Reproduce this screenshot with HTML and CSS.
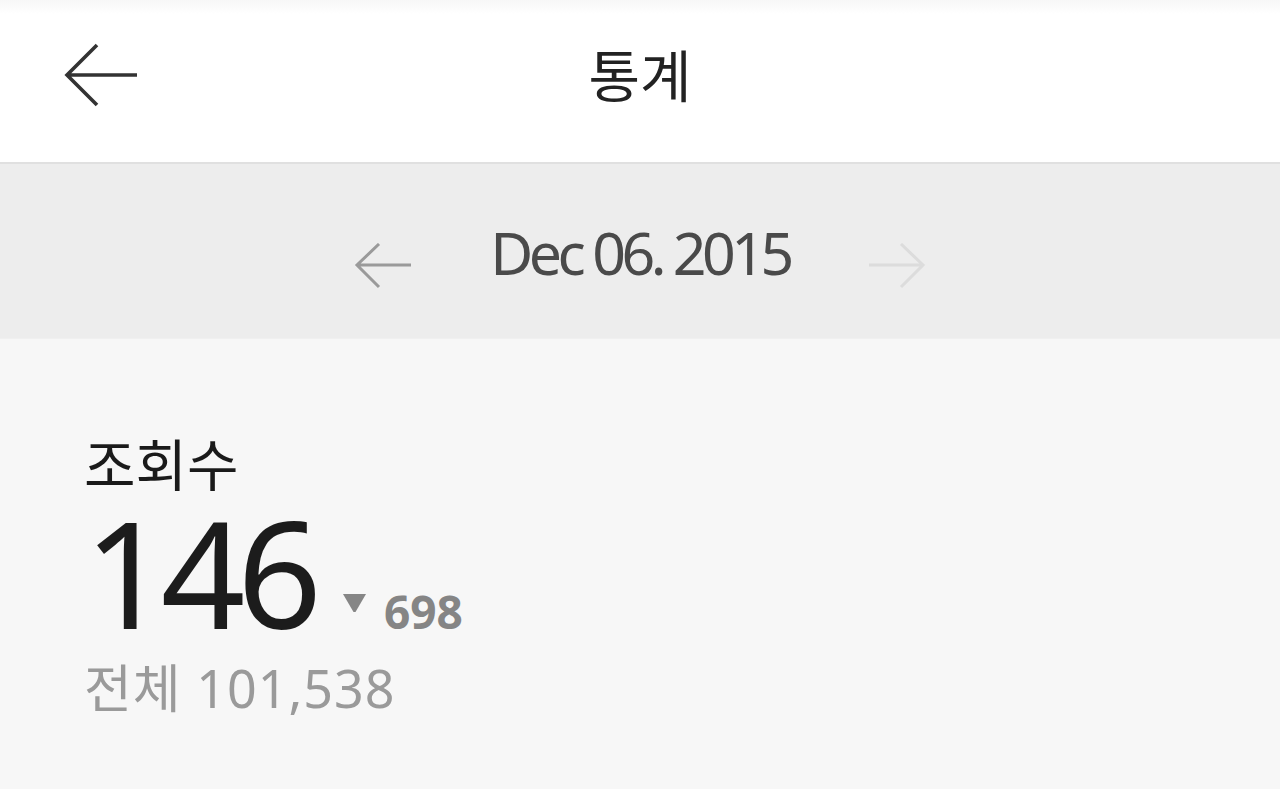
FILE: index.html
```html
<!DOCTYPE html>
<html lang="ko">
<head>
  <meta charset="UTF-8">
  <meta name="viewport" content="width=device-width, initial-scale=1.0">
  <link rel="stylesheet" href="styles.css">
  <title>통계</title>
</head>
<body>
  <header class="topbar">
    <button class="back-btn" type="button" aria-label="뒤로">
      <svg width="76" height="66" viewBox="0 0 76 66">
        <path d="M74 32 H4 M34 2 L4 32 L34 62" fill="none" stroke="#333" stroke-width="3.6"/>
      </svg>
    </button>
    <h1 class="title">통계</h1>
  </header>

  <nav class="datebar">
    <button class="nav-arrow prev" type="button" aria-label="이전">
      <svg width="58" height="46" viewBox="0 0 58 46">
        <path d="M57 22 H3 M25 1 L3 22 L25 44" fill="none" stroke="#9a9a9a" stroke-width="3"/>
      </svg>
    </button>
    <span class="date">Dec 06. 2015</span>
    <button class="nav-arrow next" type="button" aria-label="다음">
      <svg width="58" height="46" viewBox="0 0 58 46">
        <path d="M1 22 H55 M33 1 L55 22 L33 44" fill="none" stroke="#dcdcdc" stroke-width="3"/>
      </svg>
    </button>
  </nav>

  <main class="stats">
    <div class="stat-label">조회수</div>
    <div class="stat-row">
      <span class="stat-value">146</span>
      <svg class="tri" width="25" height="20" viewBox="0 0 25 20">
        <path d="M1 1 H24 L13.5 19 H11.5 Z" fill="#868686"/>
      </svg>
      <span class="stat-diff">698</span>
    </div>
    <div class="stat-total">전체 101,538</div>
  </main>
</body>
</html>
```
FILE: styles.css
```css
body {
  margin: 0;
  font-family: "Noto Sans", "Noto Sans CJK KR", sans-serif;
  background-color: #f7f7f7;
  height: 789px;
  overflow: hidden;
}
button {
  background: none;
  border: none;
  padding: 0;
  cursor: pointer;
}
.topbar {
  height: 162px;
  background: linear-gradient(#f7f7f7, #ffffff 14px);
  border-bottom: 2px solid #e0e0e0;
  display: flex;
  align-items: center;
  justify-content: center;
  position: relative;
}
.back-btn {
  position: absolute;
  left: 63px;
  top: 43px;
  display: flex;
}
.title {
  margin: -16px 0 0;
  font-family: "Noto Sans CJK KR", sans-serif;
  font-weight: 400;
  font-size: 56px;
  line-height: 1;
  color: #222;
}
.datebar {
  height: 174px;
  background-color: #ededed;
  border-bottom: 1px solid #f0f0f0;
  display: flex;
  align-items: center;
  justify-content: center;
  gap: 78px;
}
.nav-arrow {
  display: flex;
  margin-top: 30px;
}
.date {
  font-size: 59px;
  color: #4a4a4a;
  letter-spacing: -4.5px;
  margin-top: 2px;
}
.stats {
  padding: 95px 84px 0;
}
.stat-label {
  font-family: "Noto Sans CJK KR", sans-serif;
  font-size: 56px;
  color: #1a1a1a;
  line-height: 1;
}
.stat-row {
  display: flex;
  align-items: baseline;
  margin-top: 8px;
}
.stat-value {
  font-size: 148px;
  line-height: 1;
  color: #1c1c1c;
  letter-spacing: -8px;
}
.tri {
  align-self: flex-end;
  margin: 0 17px 33px 28px;
}
.stat-diff {
  font-size: 46px;
  font-weight: 700;
  color: #858585;
  line-height: 1;
}
.stat-total {
  font-size: 52px;
  color: #9a9a9a;
  line-height: 1;
  letter-spacing: 1px;
  margin-top: 16px;
}
```
